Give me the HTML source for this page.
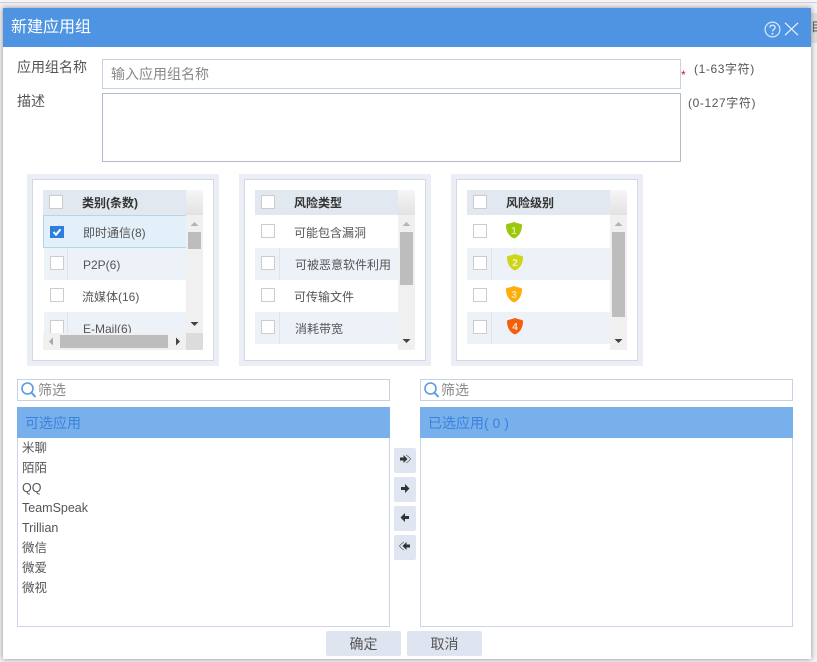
<!DOCTYPE html>
<html lang="zh"><head><meta charset="utf-8"><title>新建应用组</title>
<style>
html,body{margin:0;padding:0;width:817px;height:662px;overflow:hidden;background:#f1f1f3}
body{position:relative;font-family:"Liberation Sans","Noto Sans CJK SC",sans-serif;color:#555;font-size:12px}
div,span,svg{position:absolute;box-sizing:border-box}
.t{white-space:nowrap;line-height:18px;height:18px}
.cb{width:14px;height:14px;background:#fff;border:1px solid #ccc}
.btn{background:#e0e6f1;border-radius:2px;width:22px;height:25px;left:394px}
.b2{background:#dfe5f0;border-radius:2px;top:631px;width:75px;height:25px;text-align:center;line-height:27px;font-size:14px;color:#555}
.in{background:#fff;border:1px solid #c5d3e3}
.ph{background:#78b0ec;color:#3a80dc;font-size:14px;line-height:33px;top:407px;height:31px;width:373px;padding-left:8px}
.ls{background:#fff;border:1px solid #ccd4e8;top:437px;height:190px;width:373px}
.it{left:22px;font-size:12.5px;color:#555}
</style></head><body>
<div style="left:0;top:0;width:817px;height:2px;background:#f4f4f6"></div>
<div style="left:0;top:2px;width:817px;height:1px;background:#cfd0de"></div>
<div style="left:811px;top:13px;width:6px;height:30px;background:#dcdcdc"></div>
<div class="t" style="left:811px;top:18px;font-size:12px;color:#444;width:6px;overflow:hidden">目</div>
<div style="left:3px;top:8px;width:808px;height:651px;background:#fff;box-shadow:0 0 5px #8f8f8f"></div>
<div style="left:3px;top:8px;width:808px;height:39px;background:#4f94e2"></div>
<div class="t" style="left:11px;top:17px;font-size:16px;line-height:22px;height:22px;color:#fff">新建应用组</div>
<svg style="left:764px;top:21px" width="17" height="17" viewBox="0 0 17 17"><circle cx="8.500" cy="8.500" r="7.400" fill="none" stroke="#dbe8f8" stroke-width="1.200"/><path d="M6 6.600C6 5 7.100 4.200 8.500 4.200c1.500 0 2.600.9 2.600 2.200 0 2-2.600 2-2.600 4" fill="none" stroke="#dbe8f8" stroke-width="1.400"/><circle cx="8.500" cy="12.700" r="1" fill="#dbe8f8"/></svg>
<svg style="left:784px;top:22px" width="15" height="14" viewBox="0 0 15 14"><path d="M1 .8 14 13.200M14 .8 1 13.200" stroke="#e6f0fb" stroke-width="1.200" fill="none"/></svg>

<div class="t" style="left:17px;top:58px;font-size:14px;line-height:18px">应用组名称</div>
<div class="in" style="left:102px;top:59px;width:579px;height:30px"></div>
<div class="t" style="left:111px;top:65px;font-size:14px;color:#888">输入应用组名称</div>
<div class="t" style="left:681px;top:66px;font-size:12px;color:#d0103a">*</div>
<div class="t" style="left:694px;top:60px;font-size:12px;letter-spacing:.6px">(1-63字符)</div>
<div class="t" style="left:17px;top:92px;font-size:14px">描述</div>
<div style="left:102px;top:93px;width:579px;height:69px;background:#fff;border:1px solid #b4b8c8"></div>
<div class="t" style="left:688px;top:94px;font-size:12px;letter-spacing:.6px">(0-127字符)</div>

<!-- panel 1 -->
<div style="left:27px;top:174px;width:192px;height:192px;background:#eceef5"></div>
<div style="left:32px;top:179px;width:182px;height:182px;background:#fff;border:1px solid #d3d8e8"></div>
<div style="left:43px;top:190px;width:143px;height:25px;background:#e1e8ef"></div>
<div style="left:186px;top:190px;width:17px;height:25px;background:linear-gradient(#f6f6f6,#e2e2e2)"></div>
<div style="left:186px;top:215px;width:17px;height:118px;background:#f0f0f0"></div>
<div style="left:43px;top:215px;width:143px;height:33px;background:#e3f0f9;border:1px solid #b5d6ea;border-right:0"></div>
<div style="left:44px;top:248px;width:142px;height:32px;background:#edf1f8"></div>
<div style="left:44px;top:312px;width:142px;height:21px;background:#edf1f8"></div>
<div style="left:67px;top:248px;width:1px;height:31px;background:#dfe3ea"></div>
<div style="left:67px;top:312px;width:1px;height:21px;background:#dfe3ea"></div>
<div class="cb" style="left:49px;top:195px"></div>
<div style="left:50px;top:226px;width:14px;height:12px;background:#2e7de0"></div>
<svg style="left:50px;top:226px" width="14" height="12" viewBox="0 0 14 12"><path d="M3.500 6 6 8.700 10.500 3.300" fill="none" stroke="#fff" stroke-width="2"/></svg>
<div class="cb" style="left:50px;top:256px"></div>
<div class="cb" style="left:50px;top:288px"></div>
<div style="left:50px;top:320px;width:14px;height:13px;background:#fff;border:1px solid #ccc;border-bottom:0"></div>
<div class="t" style="left:82px;top:194px;font-weight:bold;color:#333">类别(条数)</div>
<div class="t" style="left:83px;top:224px">即时通信(8)</div>
<div class="t" style="left:83px;top:256px">P2P(6)</div>
<div class="t" style="left:82px;top:288px">流媒体(16)</div>
<div style="left:83px;top:312px;width:100px;height:21px;overflow:hidden"><div class="t" style="left:0;top:8px">E-Mail(6)</div></div>
<svg style="left:186px;top:215px" width="17" height="118"><path d="M8.500 7 12.500 11H4.500z" fill="#b4b4b4"/><path d="M4.500 107h8l-4 4z" fill="#444"/></svg>
<div style="left:188px;top:232px;width:13px;height:17px;background:#bdbdbd"></div>
<div style="left:43px;top:333px;width:143px;height:17px;background:#f0f0f0"></div>
<div style="left:60px;top:335px;width:108px;height:13px;background:#bdbdbd"></div>
<div style="left:186px;top:333px;width:17px;height:17px;background:#dcdcdc"></div>
<svg style="left:43px;top:333px" width="143" height="17"><path d="M6 8.500 10 4.500v8z" fill="#a8a8a8"/><path d="M133 4.500l4 4-4 4z" fill="#444"/></svg>

<!-- panel 2 -->
<div style="left:239px;top:174px;width:192px;height:192px;background:#eceef5"></div>
<div style="left:244px;top:179px;width:182px;height:182px;background:#fff;border:1px solid #d3d8e8"></div>
<div style="left:255px;top:190px;width:143px;height:25px;background:#e1e8ef"></div>
<div style="left:398px;top:190px;width:17px;height:25px;background:linear-gradient(#f6f6f6,#e2e2e2)"></div>
<div style="left:398px;top:215px;width:17px;height:135px;background:#f0f0f0"></div>
<div style="left:255px;top:248px;width:143px;height:32px;background:#edf1f8"></div>
<div style="left:255px;top:312px;width:143px;height:32px;background:#edf1f8"></div>
<div style="left:279px;top:248px;width:1px;height:31px;background:#dfe3ea"></div>
<div style="left:279px;top:312px;width:1px;height:31px;background:#dfe3ea"></div>
<div class="cb" style="left:261px;top:195px"></div>
<div class="cb" style="left:261px;top:224px"></div>
<div class="cb" style="left:261px;top:256px"></div>
<div class="cb" style="left:261px;top:288px"></div>
<div class="cb" style="left:261px;top:320px"></div>
<div class="t" style="left:294px;top:194px;font-weight:bold;color:#333">风险类型</div>
<div class="t" style="left:294px;top:224px">可能包含漏洞</div>
<div class="t" style="left:295px;top:256px">可被恶意软件利用</div>
<div class="t" style="left:294px;top:288px">可传输文件</div>
<div class="t" style="left:295px;top:320px">消耗带宽</div>
<svg style="left:398px;top:215px" width="17" height="135"><path d="M8.500 7 12.500 11H4.500z" fill="#b4b4b4"/><path d="M4.500 124h8l-4 4z" fill="#444"/></svg>
<div style="left:400px;top:232px;width:13px;height:53px;background:#bdbdbd"></div>

<!-- panel 3 -->
<div style="left:451px;top:174px;width:192px;height:192px;background:#eceef5"></div>
<div style="left:456px;top:179px;width:182px;height:182px;background:#fff;border:1px solid #d3d8e8"></div>
<div style="left:467px;top:190px;width:143px;height:25px;background:#e1e8ef"></div>
<div style="left:610px;top:190px;width:17px;height:25px;background:linear-gradient(#f6f6f6,#e2e2e2)"></div>
<div style="left:610px;top:215px;width:17px;height:135px;background:#f0f0f0"></div>
<div style="left:467px;top:248px;width:143px;height:32px;background:#edf1f8"></div>
<div style="left:467px;top:312px;width:143px;height:32px;background:#edf1f8"></div>
<div style="left:491px;top:248px;width:1px;height:31px;background:#dfe3ea"></div>
<div style="left:491px;top:312px;width:1px;height:31px;background:#dfe3ea"></div>
<div class="cb" style="left:473px;top:195px"></div>
<div class="cb" style="left:473px;top:224px"></div>
<div class="cb" style="left:473px;top:256px"></div>
<div class="cb" style="left:473px;top:288px"></div>
<div class="cb" style="left:473px;top:320px"></div>
<div class="t" style="left:506px;top:194px;font-weight:bold;color:#333">风险级别</div>
<svg style="left:506px;top:222px" width="16" height="17" viewBox="0 0 16 17"><path d="M8 0C10 .8 13 1.500 15 2 15.700 2.200 16 2.700 16 3.500 16 9.500 13 14.500 8 16.500 3 14.500 0 9.500 0 3.500 0 2.700.3 2.200 1 2 3 1.500 6 .8 8 0z" fill="#9bc80e"/><text x="8" y="12" font-size="10" font-weight="bold" fill="#d8ec90" text-anchor="middle" font-family="Liberation Sans">1</text></svg>
<svg style="left:507px;top:254px" width="16" height="17" viewBox="0 0 16 17"><path d="M8 0C10 .8 13 1.500 15 2 15.700 2.200 16 2.700 16 3.500 16 9.500 13 14.500 8 16.500 3 14.500 0 9.500 0 3.500 0 2.700.3 2.200 1 2 3 1.500 6 .8 8 0z" fill="#cdd41c"/><text x="8" y="12" font-size="10" font-weight="bold" fill="#f2f4b0" text-anchor="middle" font-family="Liberation Sans">2</text></svg>
<svg style="left:506px;top:286px" width="16" height="17" viewBox="0 0 16 17"><path d="M8 0C10 .8 13 1.500 15 2 15.700 2.200 16 2.700 16 3.500 16 9.500 13 14.500 8 16.500 3 14.500 0 9.500 0 3.500 0 2.700.3 2.200 1 2 3 1.500 6 .8 8 0z" fill="#fdae0c"/><text x="8" y="12" font-size="10" font-weight="bold" fill="#fde0a0" text-anchor="middle" font-family="Liberation Sans">3</text></svg>
<svg style="left:507px;top:318px" width="16" height="17" viewBox="0 0 16 17"><path d="M8 0C10 .8 13 1.500 15 2 15.700 2.200 16 2.700 16 3.500 16 9.500 13 14.500 8 16.500 3 14.500 0 9.500 0 3.500 0 2.700.3 2.200 1 2 3 1.500 6 .8 8 0z" fill="#f2600c"/><text x="8" y="12" font-size="10" font-weight="bold" fill="#fde0d0" text-anchor="middle" font-family="Liberation Sans">4</text></svg>
<svg style="left:610px;top:215px" width="17" height="135"><path d="M8.500 7 12.500 11H4.500z" fill="#b4b4b4"/><path d="M4.500 124h8l-4 4z" fill="#444"/></svg>
<div style="left:612px;top:232px;width:13px;height:85px;background:#bdbdbd"></div>

<!-- filters -->
<div class="in" style="left:17px;top:379px;width:373px;height:22px"></div>
<svg style="left:20px;top:381px" width="17" height="18" viewBox="0 0 17 18"><circle cx="7.500" cy="7.500" r="5.500" fill="none" stroke="#5b9ae4" stroke-width="1.600"/><path d="M11.500 11.700 15.500 16" stroke="#5b9ae4" stroke-width="2" fill="none"/></svg>
<div class="t" style="left:38px;top:381px;font-size:14px;color:#888">筛选</div>
<div class="in" style="left:420px;top:379px;width:373px;height:22px"></div>
<svg style="left:423px;top:381px" width="17" height="18" viewBox="0 0 17 18"><circle cx="7.500" cy="7.500" r="5.500" fill="none" stroke="#5b9ae4" stroke-width="1.600"/><path d="M11.500 11.700 15.500 16" stroke="#5b9ae4" stroke-width="2" fill="none"/></svg>
<div class="t" style="left:441px;top:381px;font-size:14px;color:#888">筛选</div>

<div class="ls" style="left:17px"></div>
<div class="ph" style="left:17px">可选应用</div>
<div class="ls" style="left:420px"></div>
<div class="ph" style="left:420px">已选应用( 0 )</div>

<div class="t it" style="top:439px">米聊</div>
<div class="t it" style="top:459px">陌陌</div>
<div class="t it" style="top:479px">QQ</div>
<div class="t it" style="top:499px">TeamSpeak</div>
<div class="t it" style="top:519px">Trillian</div>
<div class="t it" style="top:539px">微信</div>
<div class="t it" style="top:559px">微爱</div>
<div class="t it" style="top:579px">微视</div>

<div class="btn" style="top:448px"></div>
<svg style="left:394px;top:448px" width="22" height="25"><path d="M6 9.500h3.500V7l4 4-4 4v-2.500H6z" fill="#333"/><path d="M12.500 7l4 4-4 4" fill="none" stroke="#333" stroke-width=".9" stroke-dasharray="1 .7"/></svg>
<div class="btn" style="top:477px"></div>
<svg style="left:394px;top:477px" width="22" height="25"><path d="M7 10h4V7l4.500 4.500L11 16v-3H7z" fill="#333"/></svg>
<div class="btn" style="top:506px"></div>
<svg style="left:394px;top:506px" width="22" height="25"><path d="M15 10h-4V7l-4.500 4.500L11 16v-3h4z" fill="#333"/></svg>
<div class="btn" style="top:535px"></div>
<svg style="left:394px;top:535px" width="22" height="25"><path d="M16 9.500h-3.500V7l-4 4 4 4v-2.500H16z" fill="#333"/><path d="M9.500 7l-4 4 4 4" fill="none" stroke="#333" stroke-width=".9" stroke-dasharray="1 .7"/></svg>

<div class="b2" style="left:326px">确定</div>
<div class="b2" style="left:407px">取消</div>
</body></html>
